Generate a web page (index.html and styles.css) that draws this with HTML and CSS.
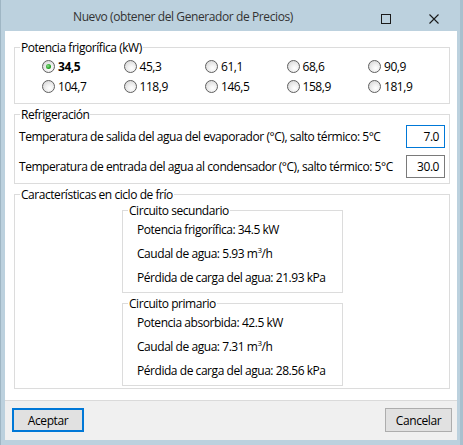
FILE: index.html
```html
<!DOCTYPE html>
<html lang="es">
<head>
<meta charset="utf-8">
<title>Nuevo</title>
<link rel="stylesheet" href="styles.css">
</head>
<body>
<div class="window">
  <div class="titlebar">
    <div class="title">Nuevo (obtener del Generador de Precios)</div>
    <div class="caption-btns">
      <span class="cap-btn"><svg width="10" height="10" viewBox="0 0 10 10"><rect x="0.5" y="0.5" width="9" height="9" fill="none" stroke="#1a1a1a" stroke-width="1"/></svg></span>
      <span class="cap-btn"><svg width="10" height="10" viewBox="0 0 10 10"><path d="M0.5 0.5 L9.5 9.5 M9.5 0.5 L0.5 9.5" stroke="#1a1a1a" stroke-width="1.1" fill="none"/></svg></span>
    </div>
  </div>
  <div class="client">
    <div class="content">
      <fieldset class="group g-power">
        <legend>Potencia frigorífica (kW)</legend>
        <div class="radio-grid">
          <label class="radio checked"><span class="dot"></span><span class="rtxt">34,5</span></label>
          <label class="radio"><span class="dot"></span><span class="rtxt">45,3</span></label>
          <label class="radio"><span class="dot"></span><span class="rtxt">61,1</span></label>
          <label class="radio"><span class="dot"></span><span class="rtxt">68,6</span></label>
          <label class="radio"><span class="dot"></span><span class="rtxt">90,9</span></label>
          <label class="radio"><span class="dot"></span><span class="rtxt">104,7</span></label>
          <label class="radio"><span class="dot"></span><span class="rtxt">118,9</span></label>
          <label class="radio"><span class="dot"></span><span class="rtxt">146,5</span></label>
          <label class="radio"><span class="dot"></span><span class="rtxt">158,9</span></label>
          <label class="radio"><span class="dot"></span><span class="rtxt">181,9</span></label>
        </div>
      </fieldset>
      <fieldset class="group g-refr">
        <legend>Refrigeración</legend>
        <div class="fields">
          <div class="field-row">
            <span class="flabel">Temperatura de salida del agua del evaporador (°C), salto térmico: 5°C</span>
            <span class="num focused">7.0</span>
          </div>
          <div class="field-row">
            <span class="flabel">Temperatura de entrada del agua al condensador (°C), salto térmico: 5°C</span>
            <span class="num">30.0</span>
          </div>
        </div>
      </fieldset>
      <fieldset class="group g-char">
        <legend>Características en ciclo de frío</legend>
        <div class="circuits">
          <fieldset class="sub">
            <legend>Circuito secundario</legend>
            <div class="lines">
              <div class="line">Potencia frigorífica: 34.5 kW</div>
              <div class="line">Caudal de agua: 5.93 m<sup>3</sup>/h</div>
              <div class="line">Pérdida de carga del agua: 21.93 kPa</div>
            </div>
          </fieldset>
          <fieldset class="sub">
            <legend>Circuito primario</legend>
            <div class="lines">
              <div class="line">Potencia absorbida: 42.5 kW</div>
              <div class="line">Caudal de agua: 7.31 m<sup>3</sup>/h</div>
              <div class="line">Pérdida de carga del agua: 28.56 kPa</div>
            </div>
          </fieldset>
        </div>
      </fieldset>
    </div>
    <div class="footer">
      <button class="btn default">Aceptar</button>
      <button class="btn">Cancelar</button>
    </div>
  </div>
</div>
</body>
</html>
```

FILE: styles.css
```css
* { box-sizing: border-box; }
html, body { margin: 0; padding: 0; }
body {
  width: 463px;
  height: 445px;
  overflow: hidden;
  font-family: "Open Sans", "Noto Sans", sans-serif;
  font-size: 12px;
  color: #000;
}
.window {
  width: 463px;
  height: 445px;
  background: #bcd1de;
  border-left: 1px solid #9fb6c4;
  border-right: 3px solid #a9c0ce;
  display: flex;
  flex-direction: column;
}
.titlebar {
  height: 31px;
  display: flex;
  align-items: center;
}
.title {
  width: 364px;
  text-align: center;
  color: #333;
  font-size: 12px;
  letter-spacing: -0.4px;
  padding-top: 2px;
}
.caption-btns {
  display: flex;
  margin-left: 16px;
  gap: 38px;
  align-self: flex-start;
  padding-top: 14px;
}
.cap-btn { display: block; width: 10px; height: 10px; }
.cap-btn svg { display: block; }
.client {
  margin: 0 3px 5px 4px;
  display: flex;
  flex-direction: column;
  flex: 1;
}
.content {
  background: #fff;
  flex: 1;
  padding: 9px 7px 0 9px;
  letter-spacing: -0.45px;
}
.group, .sub {
  margin: 0;
  padding: 0;
  border: 1px solid #dcdcdc;
  min-width: 0;
}
.group legend, .sub legend {
  margin-left: 5px;
  padding: 0 1px;
  line-height: 15px;
  height: 15px;
}
.radio-grid {
  display: grid;
  grid-template-columns: repeat(5, 81.5px);
  grid-auto-rows: 20px;
  padding: 1px 0 7px 27px;
}
.radio {
  display: flex;
  align-items: center;
  gap: 3px;
}
.dot {
  width: 13px;
  height: 13px;
  border-radius: 50%;
  border: 1px solid #5f5f5f;
  background: radial-gradient(circle at 60% 65%, #ffffff 0%, #f1f1f1 35%, #cfcfcf 100%);
  position: relative;
  flex: none;
}
.radio.checked .dot::after {
  content: "";
  position: absolute;
  left: 3px;
  top: 3px;
  width: 5px;
  height: 5px;
  border-radius: 50%;
  background: radial-gradient(circle at 40% 40%, #8fe08f 0%, #22a022 60%, #137a13 100%);
}
.radio.checked .rtxt { font-weight: bold; }
.g-refr { margin-top: 3px; }
.fields {
  display: flex;
  flex-direction: column;
  gap: 7px;
  padding: 3px 4px 5px 4px;
}
.field-row {
  display: flex;
  align-items: center;
  justify-content: space-between;
  height: 23px;
}
.num {
  width: 39px;
  height: 23px;
  border: 1px solid #7a7a7a;
  text-align: right;
  padding-right: 5px;
  line-height: 21px;
}
.num.focused { border-color: #0078d7; }
.g-char { margin-top: 3px; }
.circuits {
  display: flex;
  flex-direction: column;
  gap: 3px;
  padding: 1px 0 2px 107px;
}
.sub { width: 221px; }
.lines { padding: 0 0 2px 14px; }
.line {
  height: 24px;
  line-height: 24px;
}
.line sup {
  font-size: 8px;
  line-height: 0;
  vertical-align: 5px;
}
.footer {
  height: 40px;
  background: #f0f0f0;
  border-top: 1px solid #dadada;
  display: flex;
  justify-content: space-between;
  align-items: flex-start;
  padding: 7px 5px 0 7px;
}
.btn {
  font-family: inherit;
  font-size: 12px;
  letter-spacing: -0.4px;
  color: #000;
  background: #e1e1e1;
  border: 1px solid #adadad;
  height: 24px;
  width: 67px;
  padding: 0;
  margin: 0;
}
.btn.default {
  width: 72px;
  border: 2px solid #0078d7;
}
```
